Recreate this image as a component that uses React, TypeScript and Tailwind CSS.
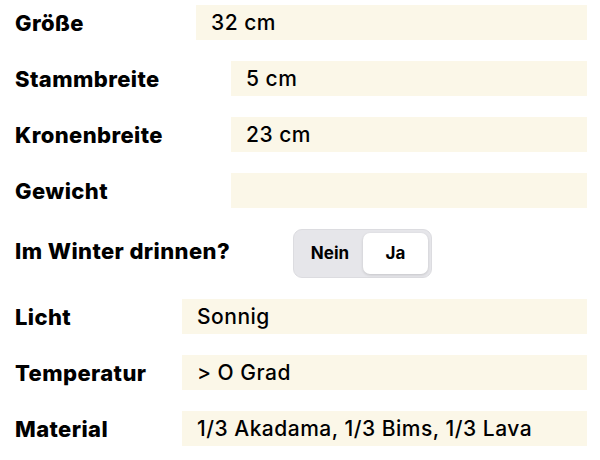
import React from "react";

function Row({ label, value, boxW }: { label: string; value: string; boxW: string }) {
  return (
    <div className="flex h-[35px] items-center">
      <div className="flex-1 pl-[15px] text-[22px] font-extrabold tracking-[0.4px] text-black leading-none">{label}</div>
      <div className={`${boxW} h-[35px] bg-[#fbf7e8] flex items-center pl-[15px] text-[21px] font-medium tracking-[0.5px] text-black leading-none`}>
        {value}
      </div>
    </div>
  );
}

export default function App() {
  return (
    <div
      className="w-[600px] h-[460px] bg-white overflow-hidden pt-[5px] pr-[13px] flex flex-col gap-[21px]"
      style={{ fontFamily: "Inter, 'Noto Sans', sans-serif" }}
    >
      <Row label="Größe" value="32 cm" boxW="w-[391px]" />
      <Row label="Stammbreite" value="5 cm" boxW="w-[356px]" />
      <Row label="Kronenbreite" value="23 cm" boxW="w-[356px]" />
      <Row label="Gewicht" value="" boxW="w-[356px]" />
      <div className="flex h-[49px] items-center">
        <div className="w-[293px] pl-[15px] text-[22px] font-extrabold tracking-[0.4px] text-black leading-none -mt-[6px]">
          Im Winter drinnen?
        </div>
        <div className="w-[139px] h-[49px] rounded-[9px] bg-[#e6e6ea] p-[3px] flex border border-[#dcdce0]">
          <div className="flex-1 flex items-center justify-center text-[17px] font-bold text-black">Nein</div>
          <div className="w-[65px] rounded-[7px] bg-white shadow-[0_1px_3px_rgba(0,0,0,0.15)] flex items-center justify-center text-[17px] font-bold text-black">
            Ja
          </div>
        </div>
      </div>
      <Row label="Licht" value="Sonnig" boxW="w-[405px]" />
      <Row label="Temperatur" value="> O Grad" boxW="w-[405px]" />
      <Row label="Material" value="1/3 Akadama, 1/3 Bims, 1/3 Lava" boxW="w-[405px]" />
    </div>
  );
}
